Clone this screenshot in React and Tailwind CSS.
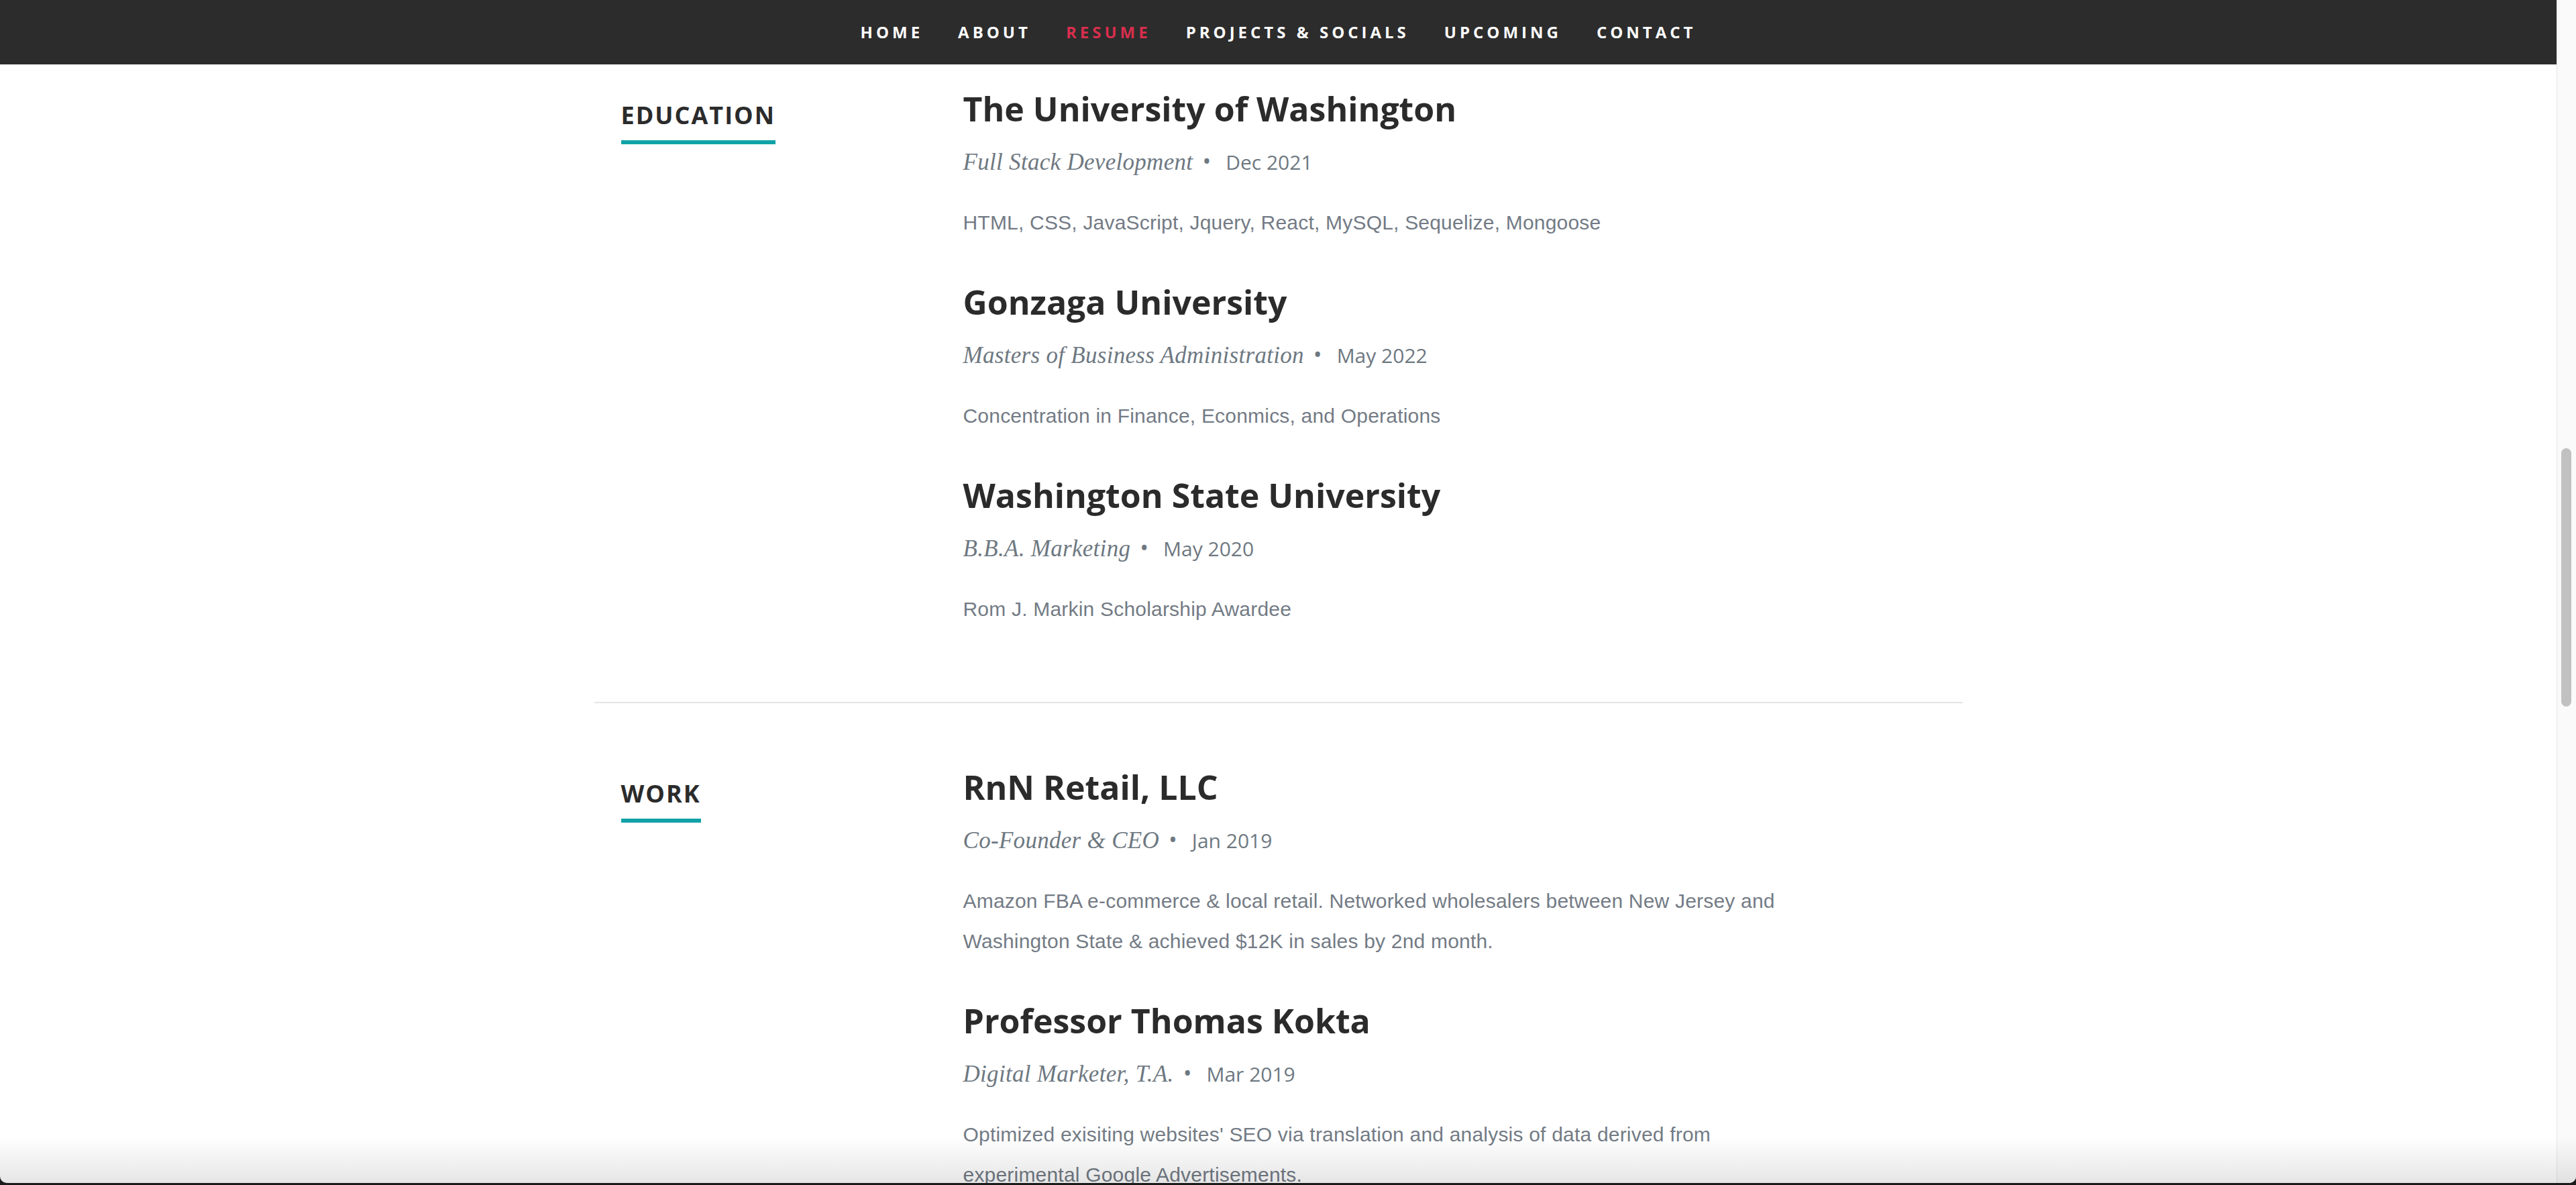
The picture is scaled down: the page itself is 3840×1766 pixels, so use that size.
import React from 'react';

const navItems = ['Home', 'About', 'Resume', 'Projects & Socials', 'Upcoming', 'Contact'];

const education = [
  {
    title: 'The University of Washington',
    role: 'Full Stack Development',
    date: 'Dec 2021',
    lines: ['HTML, CSS, JavaScript, Jquery, React, MySQL, Sequelize, Mongoose'],
  },
  {
    title: 'Gonzaga University',
    role: 'Masters of Business Administration',
    date: 'May 2022',
    lines: ['Concentration in Finance, Econmics, and Operations'],
  },
  {
    title: 'Washington State University',
    role: 'B.B.A. Marketing',
    date: 'May 2020',
    lines: ['Rom J. Markin Scholarship Awardee'],
  },
];

const work = [
  {
    title: 'RnN Retail, LLC',
    role: 'Co-Founder & CEO',
    date: 'Jan 2019',
    lines: [
      'Amazon FBA e-commerce & local retail. Networked wholesalers between New Jersey and',
      'Washington State & achieved $12K in sales by 2nd month.',
    ],
  },
  {
    title: 'Professor Thomas Kokta',
    role: 'Digital Marketer, T.A.',
    date: 'Mar 2019',
    lines: [
      "Optimized exisiting websites' SEO via translation and analysis of data derived from",
      'experimental Google Advertisements.',
    ],
  },
];

const Entry = ({ item }) => (
  <div className="mb-[58px]">
    <h3 className="h-[60px] text-[50px] leading-[60px] font-bold text-[#2b2b2b]" style={{ fontFamily: '"Open Sans", sans-serif' }}>
      {item.title}
    </h3>
    <p className="mt-[24px] h-[48px] leading-[48px] text-[#6e7881] whitespace-nowrap">
      <span className="italic text-[35px] tracking-[0.3px]" style={{ fontFamily: '"Liberation Serif", serif' }}>{item.role}</span>
      <span className="ml-[14px] mr-[22px] text-[34px]" style={{ fontFamily: '"Open Sans", sans-serif' }}>•</span>
      <span className="text-[30px]" style={{ fontFamily: '"Open Sans", sans-serif' }}>{item.date}</span>
    </p>
    <div className="mt-[38px] text-[30px] leading-[60px] tracking-[0.2px] text-[#737b85]" style={{ fontFamily: '"Liberation Sans", Arial, sans-serif' }}>
      {item.lines.map((l, i) => (
        <p key={i} className="h-[60px] whitespace-nowrap">{l}</p>
      ))}
    </div>
  </div>
);

const Section = ({ label, items, className }) => (
  <section className={`mx-auto w-[2040px] flex ${className}`}>
    <div className="w-[510px] shrink-0 px-[40px]">
      <h2
        className="mt-[6px] h-[68px] text-[36px] leading-[68px] font-bold uppercase tracking-[2px] text-[#2b2b2b]"
        style={{ fontFamily: '"Open Sans", sans-serif' }}
      >
        <span className="border-b-[6px] border-[#11a2a8] pb-[13px]">{label}</span>
      </h2>
    </div>
    <div className="flex-1 px-[40px]">
      {items.map((item, i) => (
        <Entry key={i} item={item} />
      ))}
    </div>
  </section>
);

export default function App() {
  return (
    <div className="w-[3840px] h-[1766px] bg-[#1b1b1b] overflow-hidden">
      <div className="relative h-[1763px] bg-white rounded-b-[10px] overflow-hidden flex">
        <main className="flex-1 min-w-0 h-full overflow-hidden">
          {/* top nav */}
          <nav className="h-[96px] bg-[#2c2c2c] flex items-center justify-center">
            {navItems.map((n) => (
              <a
                key={n}
                className={`px-[26px] text-[24px] font-bold uppercase tracking-[5px] ${n === 'Resume' ? 'text-[#d72e4d]' : 'text-white'}`}
                style={{ fontFamily: '"Open Sans", sans-serif' }}
              >
                {n}
              </a>
            ))}
          </nav>

          <Section label="Education" items={education} className="pt-[36px] pb-[50px]" />
          <div className="mx-auto w-[2040px] h-[2px] bg-[#e5e5e5]" />
          <Section label="Work" items={work} className="pt-[95px]" />
        </main>

        {/* scrollbar */}
        <aside className="w-[29px] shrink-0 h-full bg-[#fafafa] border-l border-[#e6e6e6]">
          <div className="mt-[668px] ml-[6px] w-[15px] h-[385px] rounded-full bg-[#c1c1c1]" />
        </aside>

        {/* window bottom shade */}
        <div className="pointer-events-none absolute left-0 right-0 bottom-0 h-[70px] bg-linear-to-b from-transparent to-black/10" />
      </div>
    </div>
  );
}
